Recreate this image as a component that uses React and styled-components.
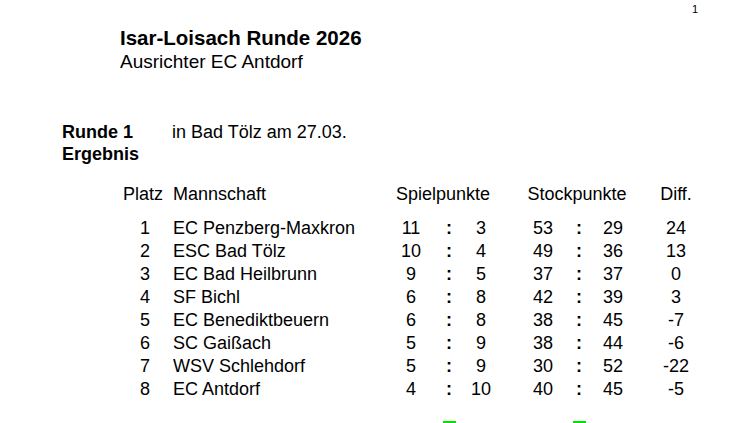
import React from 'react';
import styled, { createGlobalStyle } from 'styled-components';

const GlobalStyle = createGlobalStyle`
  body {
    margin: 0;
    background: #fff;
    color: #000;
    font-family: "Liberation Sans", Arial, sans-serif;
  }
`;

const Page = styled.div`
  width: 740px;
  height: 423px;
  overflow: hidden;
  padding-top: 3px;
  box-sizing: border-box;
`;

const PageNumber = styled.div`
  font-size: 11px;
  line-height: 12px;
  text-align: right;
  padding-right: 42px;
`;

const Heading = styled.div`
  margin: 11px 0 0 120px;
`;

const Title = styled.div`
  font-size: 20.5px;
  font-weight: bold;
  line-height: 24px;
`;

const Subtitle = styled.div`
  font-size: 19px;
  line-height: 23px;
`;

const RoundInfo = styled.div`
  display: grid;
  grid-template-columns: 110px auto;
  margin: 48px 0 0 62px;
  font-size: 18px;
  line-height: 22px;
`;

const Label = styled.div`
  font-weight: bold;
`;

// platz | name | sp : sp | gap | st : st | diff
const cols = '44px 224px 40px 36px 28px 29px 38px 34px 34px 92px';

const Table = styled.div`
  display: grid;
  grid-template-columns: ${cols};
  margin: 18px 0 0 123px;
  font-size: 18px;
  line-height: 23px;
`;

const HeadCell = styled.div`
  grid-column: ${p => p.$col};
  text-align: ${p => p.$align || 'center'};
  padding-left: ${p => p.$pad || 0}px;
  margin-bottom: 11px;
`;

const Cell = styled.div`
  text-align: ${p => p.$align || 'center'};
  padding-left: ${p => p.$pad || 0}px;
`;

const Colon = styled(Cell)`
  font-weight: bold;
`;

const Mark = styled.div`
  grid-column: ${p => p.$col};
  justify-self: center;
  width: 13px;
  height: 2px;
  margin-top: 20px;
  background: #00e400;
`;

const rows = [
  [1, 'EC Penzberg-Maxkron', 11, 3, 53, 29, 24],
  [2, 'ESC Bad Tölz', 10, 4, 49, 36, 13],
  [3, 'EC Bad Heilbrunn', 9, 5, 37, 37, 0],
  [4, 'SF Bichl', 6, 8, 42, 39, 3],
  [5, 'EC Benediktbeuern', 6, 8, 38, 45, -7],
  [6, 'SC Gaißach', 5, 9, 38, 44, -6],
  [7, 'WSV Schlehdorf', 5, 9, 30, 52, -22],
  [8, 'EC Antdorf', 4, 10, 40, 45, -5],
];

export default function App() {
  return (
    <>
      <GlobalStyle />
      <Page>
        <PageNumber>1</PageNumber>
        <Heading>
          <Title>Isar-Loisach Runde 2026</Title>
          <Subtitle>Ausrichter EC Antdorf</Subtitle>
        </Heading>
        <RoundInfo>
          <Label>Runde 1</Label>
          <div>in Bad Tölz am 27.03.</div>
          <Label>Ergebnis</Label>
        </RoundInfo>
        <Table>
          <HeadCell $col="1" $align="left">Platz</HeadCell>
          <HeadCell $col="2" $align="left" $pad={6}>Mannschaft</HeadCell>
          <HeadCell $col="3 / span 3">Spielpunkte</HeadCell>
          <HeadCell $col="7 / span 3">Stockpunkte</HeadCell>
          <HeadCell $col="10">Diff.</HeadCell>
          {rows.map(([pl, team, sp1, sp2, st1, st2, diff]) => (
            <React.Fragment key={pl}>
              <Cell>{pl}</Cell>
              <Cell $align="left" $pad={6}>{team}</Cell>
              <Cell>{sp1}</Cell>
              <Colon>:</Colon>
              <Cell>{sp2}</Cell>
              <div />
              <Cell>{st1}</Cell>
              <Colon>:</Colon>
              <Cell>{st2}</Cell>
              <Cell>{diff}</Cell>
            </React.Fragment>
          ))}
          <Mark $col="4" />
          <Mark $col="8" />
        </Table>
      </Page>
    </>
  );
}
